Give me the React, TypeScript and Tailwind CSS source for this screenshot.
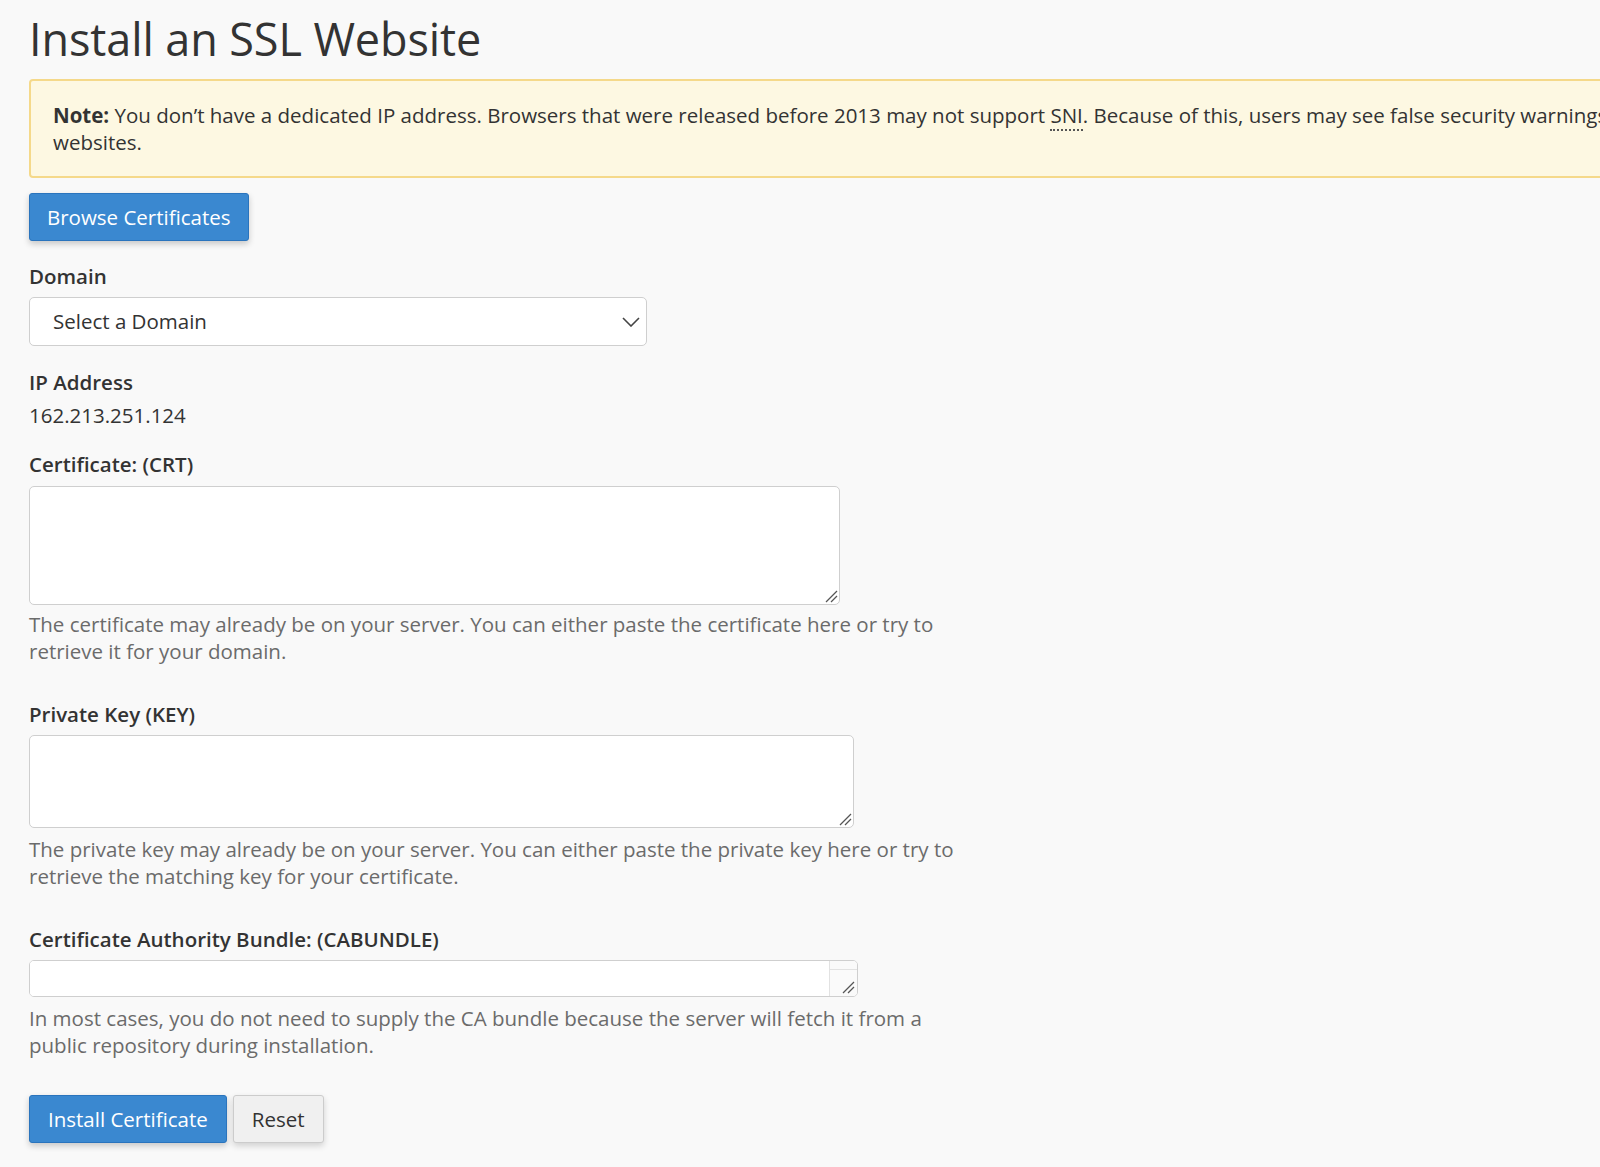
import React from "react";

const font = { fontFamily: '"Open Sans", "Noto Sans", Arial, sans-serif' };

function Grip() {
  return (
    <svg
      className="pointer-events-none absolute bottom-[2px] right-[2px]"
      width="14"
      height="14"
      viewBox="0 0 14 14"
    >
      <line x1="2" y1="13" x2="13" y2="2" stroke="#555" strokeWidth="1.3" />
      <line x1="7" y1="13" x2="13" y2="7" stroke="#555" strokeWidth="1.3" />
    </svg>
  );
}

function Label({ children, className = "" }: { children: React.ReactNode; className?: string }) {
  return (
    <label className={`block text-[20.5px] leading-[26px] font-semibold text-[#333] ${className}`}>
      {children}
    </label>
  );
}

function Help({ children, className = "" }: { children: React.ReactNode; className?: string }) {
  return <p className={`text-[20.5px] leading-[26.5px] text-[#6b6b6b] ${className}`}>{children}</p>;
}

export default function App() {
  return (
    <div
      className="w-[1600px] min-h-[1167px] overflow-hidden bg-[#f9f9f9] text-[#333]"
      style={font}
    >
      <div className="w-[2000px] pl-[29px] pt-[11px] pb-[24px]">
        <h1 className="text-[45px] leading-[56px] font-normal text-[#333] tracking-[-0.1px]">
          Install an SSL Website
        </h1>

        <div className="mt-[12px] rounded-[4px] border-2 border-[#f5d98a] bg-[#fdf8e2] px-[22px] pt-[21px] pb-[21px] text-[20.5px] leading-[26.5px] text-[#333]">
          <span className="font-bold">Note:</span> You don’t have a dedicated IP address. Browsers
          that were released before 2013 may not support{" "}
          <abbr
            title="Server Name Indication"
            className="no-underline border-b-2 border-dotted border-[#555]"
          >
            SNI
          </abbr>
          . Because of this, users may see false security warnings when they visit your SSL
          <br />
          websites.
        </div>

        <button
          type="button"
          className="mt-[15px] h-[48px] rounded-[3px] border border-[#2a74bd] bg-[#3a88d0] px-[17px] text-[20.5px] text-white shadow-[0_3px_6px_rgba(0,0,0,0.2)]"
        >
          Browse Certificates
        </button>

        <Label className="mt-[22px]">Domain</Label>
        <div className="relative mt-[8px] w-[618px]">
          <select
            className="h-[49px] w-full appearance-none rounded-[5px] border border-[#cfcfcf] bg-white pl-[23px] pr-[40px] text-[20.5px] text-[#333] outline-none"
            defaultValue=""
          >
            <option value="">Select a Domain</option>
          </select>
          <svg
            className="pointer-events-none absolute right-[7px] top-[20px]"
            width="18"
            height="10"
            viewBox="0 0 18 10"
          >
            <polyline
              points="1,1 9,9 17,1"
              fill="none"
              stroke="#444"
              strokeWidth="1.6"
            />
          </svg>
        </div>

        <Label className="mt-[23px]">IP Address</Label>
        <div className="mt-[7px] text-[20.5px] leading-[26px] text-[#333]">162.213.251.124</div>

        <Label className="mt-[23px]">Certificate: (CRT)</Label>
        <div className="relative mt-[9px] w-[811px]">
          <textarea className="block h-[119px] w-full resize-none rounded-[5px] border border-[#cfcfcf] bg-white outline-none" />
          <Grip />
        </div>
        <Help className="mt-[6px]">
          The certificate may already be on your server. You can either paste the certificate here
          or try to
          <br />
          retrieve it for your domain.
        </Help>

        <Label className="mt-[37px]">Private Key (KEY)</Label>
        <div className="relative mt-[8px] w-[825px]">
          <textarea className="block h-[93px] w-full resize-none rounded-[5px] border border-[#cfcfcf] bg-white outline-none" />
          <Grip />
        </div>
        <Help className="mt-[8px]">
          The private key may already be on your server. You can either paste the private key here
          or try to
          <br />
          retrieve the matching key for your certificate.
        </Help>

        <Label className="mt-[37px]">Certificate Authority Bundle: (CABUNDLE)</Label>
        <div className="relative mt-[8px] flex h-[37px] w-[829px] overflow-hidden rounded-[5px] border border-[#cfcfcf] bg-white">
          <textarea className="block h-full flex-1 resize-none bg-white outline-none" />
          <div className="flex w-[28px] flex-col border-l border-[#e2e2e2] bg-[#fafafa]">
            <div className="h-[9px] border-b border-[#e2e2e2]" />
            <div className="flex-1" />
          </div>
          <Grip />
        </div>
        <Help className="mt-[8px]">
          In most cases, you do not need to supply the CA bundle because the server will fetch it
          from a
          <br />
          public repository during installation.
        </Help>

        <div className="mt-[37px] flex gap-[6px]">
          <button
            type="button"
            className="h-[48px] rounded-[3px] border border-[#2a74bd] bg-[#3a88d0] px-[18px] text-[20.5px] text-white shadow-[0_3px_6px_rgba(0,0,0,0.2)]"
          >
            Install Certificate
          </button>
          <button
            type="button"
            className="h-[48px] rounded-[3px] border border-[#cccccc] bg-[#f0f0f0] px-[18px] text-[20.5px] text-[#333] shadow-[0_3px_6px_rgba(0,0,0,0.16)]"
          >
            Reset
          </button>
        </div>
      </div>
    </div>
  );
}
